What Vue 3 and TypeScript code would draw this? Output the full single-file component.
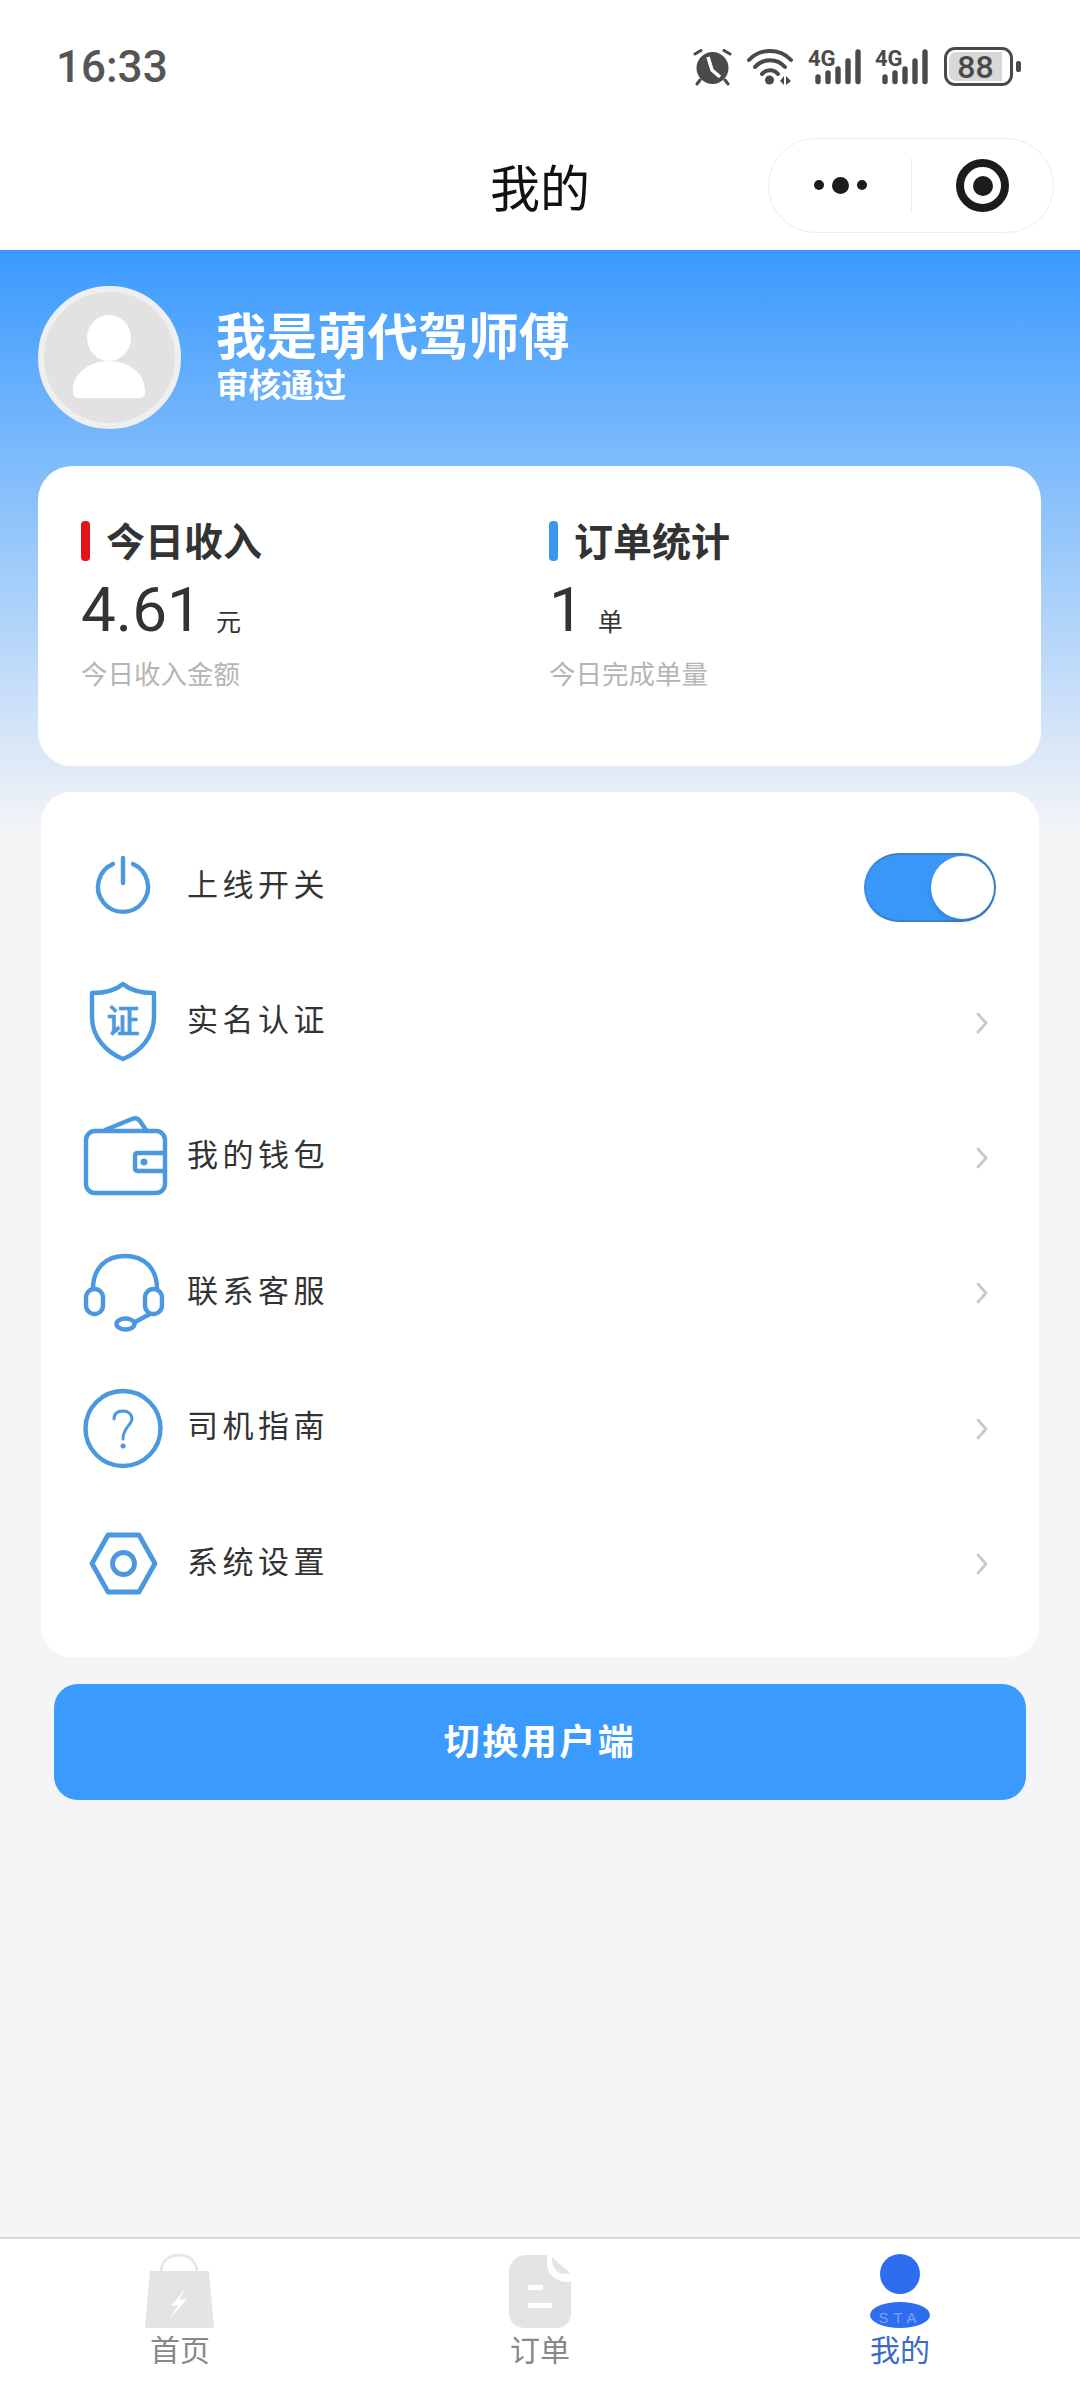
<script setup lang="ts">
interface MenuItem {
  key: string
  label: string
}

const stats = [
  { title: '今日收入', value: '4.61', unit: '元', desc: '今日收入金额', bar: 'red' },
  { title: '订单统计', value: '1', unit: '单', desc: '今日完成单量', bar: 'blue' },
]

const menu: MenuItem[] = [
  { key: 'power', label: '上线开关' },
  { key: 'shield', label: '实名认证' },
  { key: 'wallet', label: '我的钱包' },
  { key: 'service', label: '联系客服' },
  { key: 'guide', label: '司机指南' },
  { key: 'settings', label: '系统设置' },
]
</script>

<template>
  <div class="page">
    <div class="status-bar">
      <span class="time">16:33</span>
      <div class="status-icons">
        <svg class="ic-alarm" width="40" height="37" viewBox="0 0 40 37">
          <circle cx="19.500" cy="19" r="16" fill="#4a4a4a" />
          <path d="M2 5 8 1.500M37 5 31 1.500M7 31 4 35M32 31 35 35" stroke="#4a4a4a" stroke-width="3" stroke-linecap="round" fill="none" />
          <path d="M15 8 19 21 27 28" stroke="#fff" stroke-width="3.500" fill="none" />
        </svg>
        <svg class="ic-wifi" width="46" height="37" viewBox="0 0 46 37">
          <path d="M2 11C13 -1 33 -1 44 11M8 18C16 9 30 9 38 18M15 25C19 20 27 20 31 25" stroke="#4a4a4a" stroke-width="4" stroke-linecap="round" fill="none" />
          <circle cx="22.500" cy="31" r="4.500" fill="#4a4a4a" />
          <path d="M37 27V36L33 32ZM39 27V36L44 32Z" fill="#4a4a4a" />
        </svg>
        <svg class="ic-signal" width="53" height="43" viewBox="0 -6 53 43">
          <text x="0" y="17" class="sig-text">4G</text>
          <path d="M10 28V32.500M20 24V32.500M30 20V32.500M40 12V32.500M50 3V32.500" stroke="#4a4a4a" stroke-width="5.400" stroke-linecap="round" />
        </svg>
        <svg class="ic-signal second" width="53" height="43" viewBox="0 -6 53 43">
          <text x="0" y="17" class="sig-text">4G</text>
          <path d="M10 28V32.500M20 24V32.500M30 20V32.500M40 12V32.500M50 3V32.500" stroke="#4a4a4a" stroke-width="5.400" stroke-linecap="round" />
        </svg>
        <div class="battery">
          <div class="battery-body">
            <span class="battery-fill">88</span>
          </div>
          <i class="battery-nub" />
        </div>
      </div>
    </div>

    <div class="nav-bar">
      <span class="nav-title">我的</span>
      <div class="capsule">
        <div class="capsule-dots">
          <i class="dot" />
          <i class="dot big" />
          <i class="dot" />
        </div>
        <i class="capsule-line" />
        <div class="capsule-target">
          <i />
        </div>
      </div>
    </div>

    <main class="main">
      <section class="profile">
        <div class="avatar">
          <svg width="131" height="131" viewBox="0 0 131 131">
            <ellipse cx="65" cy="46" rx="22" ry="23" fill="#fff" />
            <path d="M29 100C28 82 45 69 65 69S102 82 101 100C101 104 99 106 95 106H35C31 106 29 104 29 100Z" fill="#fff" />
          </svg>
        </div>
        <div class="profile-text">
          <div class="name">我是萌代驾师傅</div>
          <div class="audit">审核通过</div>
        </div>
      </section>

      <section class="stat-card">
        <div v-for="s in stats" :key="s.title" class="stat">
          <div class="stat-title">
            <i class="stat-bar" :class="s.bar" />
            <span>{{ s.title }}</span>
          </div>
          <div class="stat-value">
            <span class="num">{{ s.value }}</span>
            <span class="unit">{{ s.unit }}</span>
          </div>
          <div class="stat-desc">{{ s.desc }}</div>
        </div>
      </section>

      <section class="menu-card">
        <div v-for="item in menu" :key="item.key" class="menu-row">
          <svg class="menu-icon" width="90" height="90" viewBox="0 0 90 90" fill="none" stroke="#4a98e0" stroke-width="4.400" stroke-linecap="round" stroke-linejoin="round">
            <template v-if="item.key === 'power'">
              <path d="M35 24A25 25 0 1 0 55 24" />
              <path d="M45 18V43" />
            </template>
            <template v-else-if="item.key === 'shield'">
              <path d="M45 9C52 15 64 18 76 18V42C76 62 62 77 45 84C28 77 14 62 14 42V18C26 18 38 15 45 9Z" />
              <text x="45" y="58" class="shield-text">证</text>
            </template>
            <template v-else-if="item.key === 'wallet'">
              <rect x="8" y="21" width="79" height="62" rx="9" />
              <path d="M87 43H60Q57 43 57 46V58Q57 61 60 61H87" />
              <circle cx="66" cy="52" r="3.500" fill="#4a98e0" stroke="none" />
              <path d="M27 20 54 9Q59 7 62 11L68 20" />
            </template>
            <template v-else-if="item.key === 'service'">
              <path d="M15 43C15 22 28 10 47 10S79 22 79 43" />
              <rect x="8" y="43" width="17" height="25" rx="8.500" />
              <rect x="67" y="43" width="17" height="25" rx="8.500" />
              <ellipse cx="47.500" cy="78" rx="9" ry="5.500" />
              <path d="M57 76 72 68" />
            </template>
            <template v-else-if="item.key === 'guide'">
              <circle cx="45" cy="47.500" r="37.500" />
              <path d="M36 38C36 32 40 30 45 30S54 33 54 38C54 44 45 46 45 58" stroke-width="3" />
              <circle cx="45" cy="65" r="2.500" fill="#4a98e0" stroke="none" />
            </template>
            <template v-else>
              <path d="M14 46.500 30 18H61L77 46.500 61 75H30Z" stroke-width="4.800" />
              <circle cx="45.500" cy="46.500" r="11" stroke-width="4.800" />
            </template>
          </svg>
          <span class="menu-label">{{ item.label }}</span>
          <div v-if="item.key === 'power'" class="switch">
            <i class="knob" />
          </div>
          <svg v-else class="arrow" width="12" height="22" viewBox="0 0 12 22" fill="none" stroke="#c9c9c9" stroke-width="2.800" stroke-linecap="round" stroke-linejoin="round">
            <path d="M2 2 10 11 2 20" />
          </svg>
        </div>
      </section>

      <button class="switch-btn"><span>切换用户端</span></button>
    </main>

    <nav class="tab-bar">
      <div class="tab">
        <svg width="70" height="76" viewBox="0 0 70 76">
          <path d="M16 20C16 8 24 2 34 2S52 8 52 20" fill="none" stroke="#e8e8e8" stroke-width="3" />
          <path d="M5 18H64L69 75H0Z" fill="#e4e4e4" />
          <path d="M41 35 26 53 33 52 25 66 42 46 34 47Z" fill="#fff" />
        </svg>
        <span>首页</span>
      </div>
      <div class="tab">
        <svg width="70" height="76" viewBox="0 0 70 76">
          <path d="M22 2H42V10C42 22 52 30 66 29V60C66 69 60 75 51 75H21C11 75 4 69 4 60V20C4 9 11 2 22 2Z" fill="#e4e4e4" />
          <path d="M47 4 65 20C55 24 46 16 47 4Z" fill="#e4e4e4" />
          <path d="M23 32H38V37H23ZM23 50H47V55H23Z" fill="#fff" />
        </svg>
        <span>订单</span>
      </div>
      <div class="tab active">
        <svg width="70" height="76" viewBox="0 0 70 76">
          <circle cx="35" cy="21" r="20" fill="#2f6df0" />
          <ellipse cx="35" cy="62" rx="30" ry="13" fill="#2f6df0" />
          <text x="35" y="70" class="tab-mark">STA</text>
        </svg>
        <span>我的</span>
      </div>
    </nav>
  </div>
</template>

<style scoped>
.page {
  width: 1080px;
  min-height: 2388px;
  display: flex;
  flex-direction: column;
  background: #f5f5f7;
  font-family: "Noto Sans CJK SC", "Noto Sans", sans-serif;
}

.status-bar {
  height: 120px;
  box-sizing: border-box;
  padding: 42px 59px 0 56px;
  display: flex;
  justify-content: space-between;
  align-items: flex-start;
  background: #fff;
}

.time {
  font-family: Roboto, sans-serif;
  font-size: 44px;
  font-weight: 500;
  line-height: 50px;
  color: #555;
}

.status-icons {
  display: flex;
  align-items: flex-start;
  margin-top: 5px;
}

.ic-alarm {
  margin: 2px 14px 0 0;
}

.ic-wifi {
  margin: 2px 15px 0 0;
}

.ic-signal {
  margin-top: -4px;
}

.ic-signal.second {
  margin-left: 14px;
  margin-right: 16px;
}

.sig-text {
  font-family: Roboto, sans-serif;
  font-size: 22px;
  font-weight: 700;
  fill: #4a4a4a;
}

.battery {
  display: flex;
  align-items: center;
  gap: 3px;
}

.battery-body {
  width: 69px;
  height: 39px;
  box-sizing: border-box;
  border: 3px solid #4a4a4a;
  border-radius: 11px;
  padding: 2px;
  display: flex;
}

.battery-fill {
  width: 53px;
  background: #d8d8d8;
  border-radius: 7px 0 0 7px;
  font-family: Roboto, sans-serif;
  font-size: 32px;
  font-weight: 500;
  line-height: 31px;
  text-align: center;
  color: #4a4a4a;
}

.battery-nub {
  width: 5px;
  height: 11px;
  border-radius: 2px;
  background: #4a4a4a;
}

.nav-bar {
  height: 130px;
  box-sizing: border-box;
  display: grid;
  grid-template-columns: 1fr auto 1fr;
  align-items: center;
  padding: 0 26px;
  background: #fff;
}

.nav-title {
  grid-column: 2;
  font-size: 50px;
  line-height: 60px;
  color: #111;
}

.capsule {
  grid-column: 3;
  justify-self: end;
  width: 286px;
  height: 95px;
  box-sizing: border-box;
  border: 1px solid #ececec;
  border-radius: 48px;
  display: flex;
  align-items: center;
}

.capsule-dots {
  width: 142px;
  display: flex;
  justify-content: center;
  align-items: center;
  gap: 8px;
}

.dot {
  width: 10px;
  height: 10px;
  border-radius: 50%;
  background: #1c1c1c;
}

.dot.big {
  width: 17px;
  height: 17px;
}

.capsule-line {
  width: 1px;
  height: 55px;
  background: #eee;
}

.capsule-target {
  flex: 1;
  display: flex;
  justify-content: center;
  position: relative;
}

.capsule-target::before {
  content: "";
  width: 53px;
  height: 53px;
  box-sizing: border-box;
  border: 8px solid #1c1c1c;
  border-radius: 50%;
}

.capsule-target i {
  position: absolute;
  top: 17px;
  left: 50%;
  margin-left: -10px;
  width: 20px;
  height: 20px;
  border-radius: 50%;
  background: #1c1c1c;
}

.main {
  flex: 1;
  background: linear-gradient(#3a9afe 0, #f5f5f7 585px);
}

.profile {
  display: flex;
  align-items: center;
  gap: 35px;
  padding: 36px 38px 37px;
}

.avatar {
  width: 143px;
  height: 143px;
  box-sizing: border-box;
  border: 6px solid #efefef;
  border-radius: 50%;
  background: #e2e2e2;
  overflow: hidden;
}

.avatar svg {
  display: block;
}

.profile-text {
  color: #fff;
  font-weight: 700;
  margin-top: -10px;
}

.name {
  font-size: 50.500px;
  line-height: 60px;
}

.audit {
  font-size: 32.500px;
  line-height: 40px;
}

.stat-card {
  margin: 0 39px 26px 38px;
  height: 300px;
  box-sizing: border-box;
  padding: 55px 0 0 43px;
  display: grid;
  grid-template-columns: 468px 1fr;
  background: #fff;
  border-radius: 34px;
}

.stat-title {
  display: flex;
  align-items: center;
  gap: 16px;
  font-size: 39px;
  line-height: 40px;
  font-weight: 700;
  color: #333;
}

.stat-title span {
  margin-top: -5px;
}

.stat-bar {
  width: 9px;
  height: 40px;
  border-radius: 4px;
}

.stat-bar.red {
  background: #e0141a;
}

.stat-bar.blue {
  background: #3a96ee;
}

.stat-value {
  display: flex;
  align-items: baseline;
  gap: 14px;
  margin-top: 9px;
  color: #333;
}

.num {
  font-family: Roboto, sans-serif;
  font-size: 62px;
  line-height: 80px;
}

.unit {
  font-size: 25px;
}

.stat-desc {
  margin-top: 5px;
  font-size: 26.500px;
  line-height: 36px;
  color: #b5b5b5;
}

.menu-card {
  margin: 0 41px;
  padding: 25px 43px 28px 37px;
  background: #fff;
  border-radius: 30px;
}

.menu-row {
  height: 135.400px;
  display: flex;
  align-items: center;
}

.menu-icon {
  flex: none;
  margin-right: 19px;
}

.shield-text {
  font-size: 33px;
  font-weight: 500;
  fill: #4a98e0;
  stroke: #4a98e0;
  stroke-width: 0.6px;
  text-anchor: middle;
}

.menu-label {
  flex: 1;
  font-size: 31px;
  letter-spacing: 4.500px;
  line-height: 40px;
  margin-bottom: 4px;
  color: #333;
}

.switch {
  width: 132px;
  height: 69px;
  box-sizing: border-box;
  border: 2px solid #3f80c0;
  border-left-color: #3a8ae6;
  border-radius: 35px;
  background: #3a96f8;
  position: relative;
  margin-top: 5px;
}

.knob {
  position: absolute;
  top: 1px;
  right: 0;
  width: 63px;
  height: 63px;
  border-radius: 50%;
  background: #fff;
  box-shadow: 0 3px 5px rgba(0, 0, 0, 0.12);
}

.arrow {
  margin: 5px 8px 0 0;
}

.switch-btn {
  display: block;
  width: 972px;
  height: 116px;
  margin: 27px 0 0 54px;
  padding: 0 0 6px;
  border: 0;
  border-radius: 24px;
  background: #3a9afe;
  color: #fff;
  font-family: inherit;
  font-size: 36px;
  font-weight: 700;
  letter-spacing: 2.500px;
}

.tab-bar {
  height: 151px;
  box-sizing: border-box;
  border-top: 2px solid #d8d8d8;
  background: #fff;
  display: grid;
  grid-template-columns: repeat(3, 1fr);
  padding: 14px 0 0;
}

.tab {
  display: flex;
  flex-direction: column;
  align-items: center;
  font-size: 30px;
  line-height: 38px;
  color: #888;
}

.tab svg {
  display: block;
}

.tab.active {
  color: #3b6bc4;
}

.tab-mark {
  font-family: "Liberation Sans", sans-serif;
  font-size: 15px;
  letter-spacing: 5px;
  fill: #7ba3f5;
  text-anchor: middle;
}
</style>
